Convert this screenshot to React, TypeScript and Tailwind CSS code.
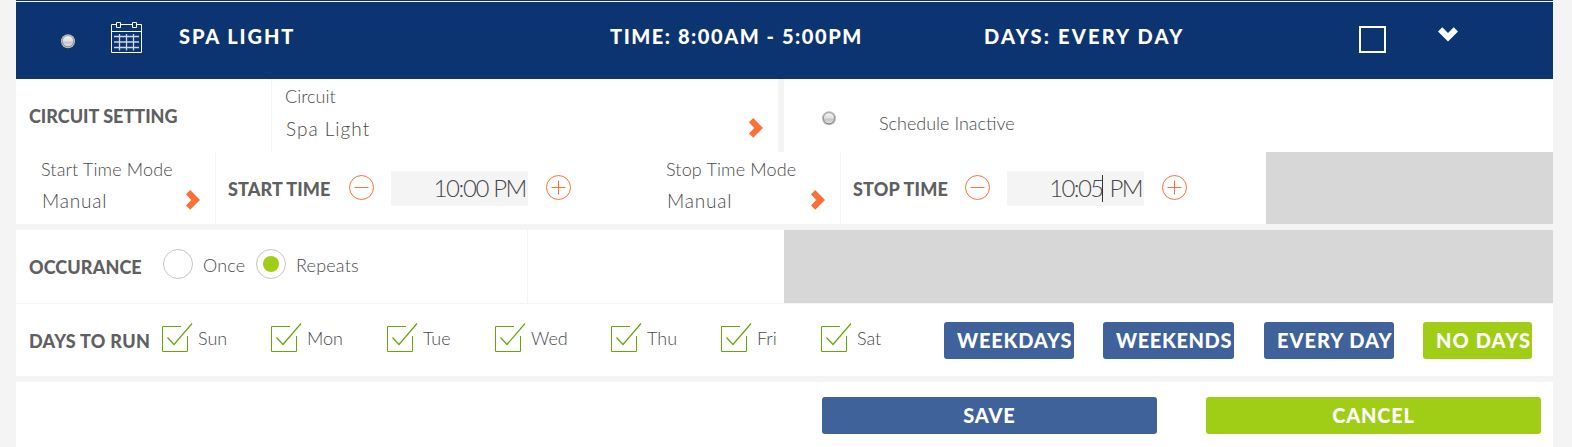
import React, { useState } from "react";

const week = [
  { name: "Sun", cell: "w-[109px]" },
  { name: "Mon", cell: "w-[116px]" },
  { name: "Tue", cell: "w-[108px]" },
  { name: "Wed", cell: "w-[116px]" },
  { name: "Thu", cell: "w-[110px]" },
  { name: "Fri", cell: "w-[100px]" },
  { name: "Sat", cell: "w-[123px]" },
];

const presets = [
  {
    name: "WEEKDAYS",
    days: ["Mon", "Tue", "Wed", "Thu", "Fri"],
    style: "w-[130px] mr-[29px] bg-[#3e6299] tracking-[0.8px]",
  },
  {
    name: "WEEKENDS",
    days: ["Sun", "Sat"],
    style: "w-[131px] mr-[30px] bg-[#3e6299] tracking-[0.6px]",
  },
  {
    name: "EVERY DAY",
    days: week.map((d) => d.name),
    style: "w-[130px] mr-[29px] bg-[#3e6299] tracking-[1px]",
  },
  {
    name: "NO DAYS",
    days: [],
    style: "w-[109px] bg-[#a0ce16] tracking-[1.1px]",
  },
];

const Led = ({ id, className }: any) => (
  <svg className={`block shrink-0 ${className}`} width="16" height="16" viewBox="0 0 16 16">
    <defs>
      <linearGradient id={`${id}-rim`} x1="0" y1="0" x2="0" y2="1">
        <stop offset="0" stopColor="#a3a3a3" />
        <stop offset="1" stopColor="#858585" />
      </linearGradient>
      <linearGradient id={`${id}-fill`} x1="0" y1="0" x2="0" y2="1">
        <stop offset="0" stopColor="#f6f6f6" />
        <stop offset="0.45" stopColor="#e2e2e2" />
        <stop offset="0.6" stopColor="#c6c6c6" />
        <stop offset="1" stopColor="#e4e4e4" />
      </linearGradient>
    </defs>
    <circle cx="8" cy="8.2" r="7" fill="#bdbdbd" />
    <circle cx="8" cy="8.2" r="5.6" fill={`url(#${id}-fill)`} stroke={`url(#${id}-rim)`} />
  </svg>
);

const CalendarIcon = () => (
  <svg className="block shrink-0" width="31" height="31" viewBox="0 0 31 31" fill="none" stroke="#fff">
    <path d="M5.5 2.5h-5v28h30v-28h-5M9.5 2.5h11.5M.5 9.5h30" />
    <path d="M5.5.5h4v5h-4zM21.5.5h4v5h-4z" />
    <path
      d="M3 14.5h25M3 20h25M3 25.5h25M8.5 12v16.5M15.5 12v16.5M22.5 12v16.5"
      strokeWidth="1.3"
      strokeOpacity="0.8"
    />
  </svg>
);

const Chevron = ({ className = "" }) => (
  <svg className={`block shrink-0 ${className}`} width="14" height="20" viewBox="0 0 14 20" fill="currentColor">
    <path d="M4.2 0 14 9.9 4.2 19.8 0 15.6 5.2 9.9 0 4.2z" />
  </svg>
);

const StepButton = ({ plus = false, className = "" }) => (
  <button className={`block shrink-0 ${className}`}>
    <svg className="block" width="25" height="25" viewBox="0 0 25 25" fill="none" stroke="#ff7038">
      <circle cx="12.5" cy="12.5" r="12" />
      <path d={plus ? "M5.5 12.5h14M12.5 5.5v14" : "M5.5 12.5h14"} />
    </svg>
  </button>
);

const CheckBox = ({ checked }: any) => (
  <svg className="block shrink-0" width="31" height="30" viewBox="0 0 31 30" fill="none" stroke="#64a70b">
    {checked ? (
      <>
        <path d="M19 3.5H.5v25h25V13" />
        <path d="M5.5 14.5l6.500 7L30 .5" strokeWidth="1.2" />
      </>
    ) : (
      <path d="M.5 3.5h25v25H.5z" />
    )}
  </svg>
);

const Radio = ({ checked, className, onClick }: any) => (
  <button
    onClick={onClick}
    className={`flex size-[30px] shrink-0 items-center justify-center rounded-full border border-[#c4c4c4] ${className}`}
  >
    {checked && <span className="size-4 rounded-full bg-[#a0ce16]" />}
  </button>
);

const TimeMode = ({ label, className }: any) => (
  <div className={`flex h-full shrink-0 justify-between border-r border-[#f4f4f4] pr-[15px] ${className}`}>
    <div>
      <p className="pt-[5px] text-[18px] leading-6 tracking-[0.15px]">{label}</p>
      <p className="pt-2 pl-px text-[19px] leading-6 tracking-[0.8px]">Manual</p>
    </div>
    <Chevron className="mt-[38px] text-[#ff7038]" />
  </div>
);

const App = () => {
  const [repeats, setRepeats] = useState(true);
  const [selected, setSelected] = useState<string[]>(week.map((d) => d.name));

  return (
    <div className="h-[447px] overflow-hidden bg-[#f4f4f4] pr-[19px] pl-4 font-['Lato',sans-serif] font-light text-[#48494b]">
      <div className="h-px bg-[#0c3470]" />
      <div className="mt-px flex h-[77px] bg-[#0c3470] pt-5 pl-11 text-[20px] leading-7 font-black text-white shadow-[0_-1px_0_#fff]">
        <Led id="header" className="mt-[11px]" />
        <div className="w-[103px] pl-[35px]">
          <CalendarIcon />
        </div>
        <p className="w-[431px] tracking-[1.9px]">SPA LIGHT</p>
        <p className="w-[374px] tracking-[1.55px]">TIME: 8:00AM - 5:00PM</p>
        <p className="w-[375px] tracking-[2.2px]">DAYS: EVERY DAY</p>
        <div className="mt-1 size-[27px] border-2 border-white" />
        <svg className="mt-[5px] ml-[52px] block" width="20" height="15" viewBox="0 0 20 15" fill="#fff">
          <path d="M0 4.500 4.300.3 10 6 15.700.3 20 4.500 10 14.500z" />
        </svg>
      </div>

      <div className="flex h-[73px] bg-white">
        <p className="w-64 border-r border-[#f4f4f4] pt-[25px] pl-[13px] text-[18px] leading-6 font-black text-[#5f6062]">
          CIRCUIT SETTING
        </p>
        <div className="flex w-[506px] justify-between pr-[15px] pl-[13px]">
          <div>
            <p className="pt-[5px] text-[18px] leading-6">Circuit</p>
            <p className="pt-[9px] pl-px text-[19px] leading-6 tracking-[1px]">Spa Light</p>
          </div>
          <Chevron className="mt-[39px] text-[#ff7038]" />
        </div>
        <div className="flex flex-1 border-l-6 border-[#f4f4f4] pl-[37px]">
          <Led id="schedule" className="mt-[31px]" />
          <p className="pt-8 pl-[42px] text-[18px] leading-6">Schedule Inactive</p>
        </div>
      </div>

      <div className="flex h-[72px] bg-white">
        <TimeMode label="Start Time Mode" className="w-[200px] pl-[25px]" />
        <p className="w-[133px] pt-[25px] pl-3 text-[18px] leading-6 font-black tracking-[0.1px] text-[#5f6062]">
          START TIME
        </p>
        <StepButton className="mt-[23px] self-start" />
        <div className="mt-[19px] ml-[17px] h-[35px] w-[137px] bg-[#f4f4f4] pr-0.5 text-right text-[24px] leading-[33px] tracking-[-1.4px]">
          10:00 PM
        </div>
        <StepButton plus className="mt-[23px] ml-[18px] self-start" />
        <TimeMode label="Stop Time Mode" className="ml-[69px] w-[201px] pl-[26px]" />
        <p className="w-[124px] pt-[25px] pl-3 text-[18px] leading-6 font-black tracking-[0.2px] text-[#5f6062]">
          STOP TIME
        </p>
        <StepButton className="mt-[23px] self-start" />
        <div className="mt-[19px] ml-[17px] flex h-[35px] w-[137px] items-center justify-end bg-[#f4f4f4] pr-0.5 pb-px text-[24px] leading-[34px] tracking-[-1.6px]">
          <span className="-mr-px">10:05</span>
          <span className="-mr-px h-[27px] w-px bg-[#333]" />
          <span className="pl-[3px] whitespace-pre"> PM</span>
        </div>
        <StepButton plus className="mt-[23px] ml-[18px] self-start" />
        <div className="ml-auto w-[287px] bg-[#d7d7d7]" />
      </div>

      <div className="mt-1.5 flex h-[74px] border-b border-[#f4f4f4] bg-white text-[18px] leading-6">
        <div className="flex w-[512px] border-r border-[#f4f4f4] pl-[13px]">
          <p className="w-[134px] pt-[25px] font-black tracking-[0.1px] text-[#5f6062]">OCCURANCE</p>
          <Radio checked={!repeats} className="mt-[19px]" onClick={() => setRepeats(false)} />
          <p className="w-[63px] pt-[23px] pl-[10px] tracking-[0.2px]">Once</p>
          <Radio checked={repeats} className="mt-[19px]" onClick={() => setRepeats(true)} />
          <p className="pt-[23px] pl-[10px] tracking-[0.2px]">Repeats</p>
        </div>
        <div className="ml-auto w-[769px] bg-[#d7d7d7]" />
      </div>

      <div className="flex h-[72px] bg-white pl-[13px] text-[18px] leading-6">
        <p className="w-[133px] pt-[25px] font-black tracking-[0.3px] text-[#5f6062]">DAYS TO RUN</p>
        {week.map((day) => (
          <button
            key={day.name}
            className={`flex shrink-0 pt-[19px] text-left ${day.cell}`}
            onClick={() =>
              setSelected(
                selected.includes(day.name) ? selected.filter((d) => d !== day.name) : [...selected, day.name]
              )
            }
          >
            <CheckBox checked={selected.includes(day.name)} />
            <span className="pt-[3px] pl-[5px]">{day.name}</span>
          </button>
        ))}
        {presets.map((preset) => (
          <button
            key={preset.name}
            onClick={() => setSelected(preset.days)}
            className={`mt-[18px] h-[37px] shrink-0 rounded-[3px] pb-0.5 pl-[13px] text-left text-[20px] font-black whitespace-nowrap text-white ${preset.style}`}
          >
            {preset.name}
          </button>
        ))}
      </div>

      <div className="mt-1.5 flex h-[65px] justify-end gap-[49px] bg-white pt-[15px] pr-3 text-[20px] font-black tracking-[0.8px] text-white">
        <button className="h-[37px] w-[335px] rounded-[3px] bg-[#3e6299] pb-0.5">SAVE</button>
        <button className="h-[37px] w-[335px] rounded-[3px] bg-[#a0ce16] pb-0.5">CANCEL</button>
      </div>
    </div>
  );
};

export default App;
